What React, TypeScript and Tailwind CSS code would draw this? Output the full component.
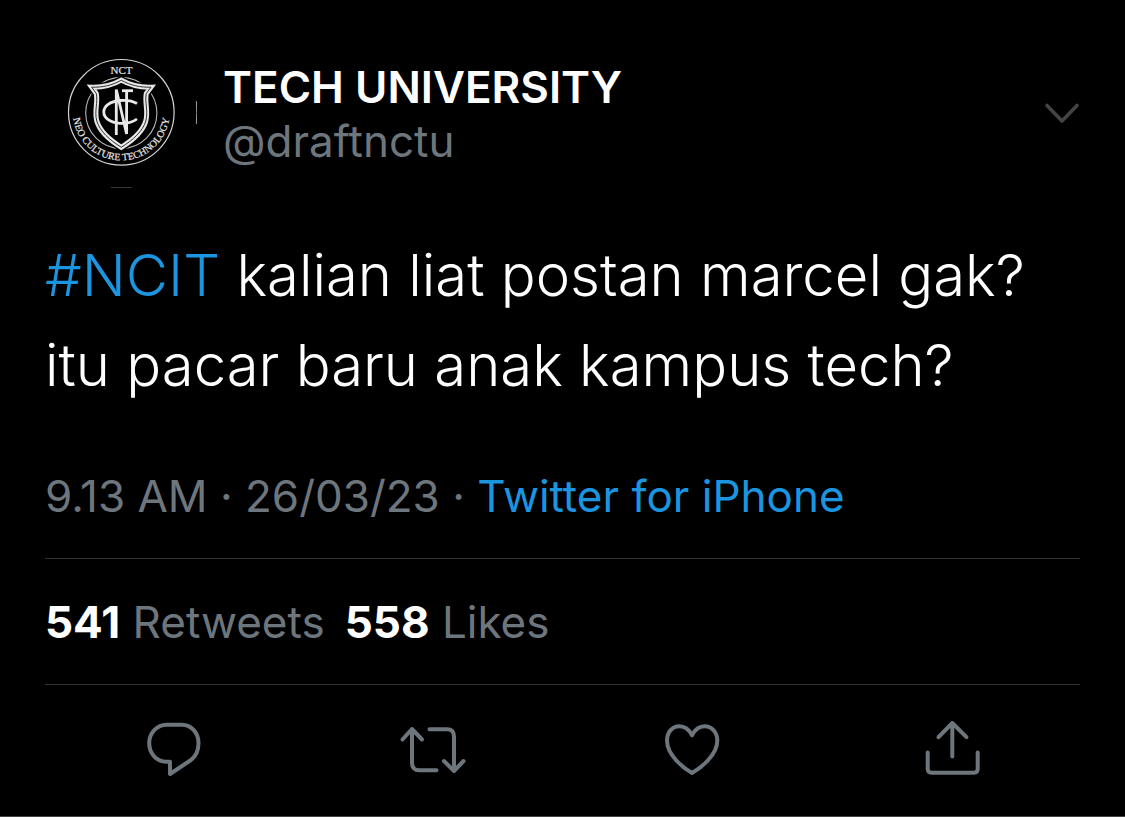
import type { ReactNode } from 'react';

const actions: { label: string; icon: ReactNode }[] = [
  {
    label: 'Reply',
    icon: (
      <path d="M44 11.7H28.5C19 11.7 11.2 20 11.2 30C11.2 40.5 18.5 48.7 28.5 48.7H32V61L53 47C57.5 43.5 60.5 37 60.5 30C60.5 20 53.5 11.7 44 11.7Z" />
    ),
  },
  {
    label: 'Retweet',
    icon: (
      <>
        <path d="M5.5 26.5L15 16L25 26.5" />
        <path d="M15 16.5V50C15 54.5 17.5 57.3 22 57.3H39.5" />
        <path d="M32.5 16.3H50C54.5 16.3 57 19 57 23.5V57.5" />
        <path d="M47 48L57 58L66.5 48" />
      </>
    ),
  },
  {
    label: 'Like',
    icon: (
      <path d="M36 22.3C33 16.5 28.8 13.3 23.5 13.3C16 13.3 11 19.5 11 27.5C11 42 27 54.8 36 60C45 54.8 61.3 42 61.3 27.5C61.3 19.5 56 13.3 48.5 13.3C43.2 13.3 39 16.5 36 22.3Z" />
    ),
  },
  {
    label: 'Share',
    icon: (
      <>
        <path d="M23.5 24.2L37.3 10L51.5 24.2" />
        <path d="M37.3 10.5V43.5" />
        <path d="M12.7 39.5V56C12.7 58.5 14 59.7 16.5 59.7H59C61.5 59.7 62.7 58.5 62.7 56V39.5" />
      </>
    ),
  },
];

const shield =
  'M45.7 51.2C56 51.5 66 49.5 75.3 44.2C84.6 49.5 94.6 51.5 105 51.2L100.3 57.5C98.5 67 102.5 75 99.8 85C97 95 87 104 75.3 111.3C63.6 104 53.6 95 50.8 85C48.1 75 52.1 67 50.3 57.5Z';

function Avatar() {
  return (
    <svg viewBox="-1 0 152 152" className="size-38 shrink-0" fill="none" role="img" aria-label="Tech University">
      <circle cx="75.3" cy="76.3" r="52.8" stroke="#d4d4d4" strokeWidth="1.2" />
      <circle cx="75.3" cy="77" r="35.6" stroke="#b5b5b5" strokeWidth="1.1" />
      <path d={shield} fill="#000" stroke="#000" strokeWidth="8" />
      <path d={shield} stroke="#e8e8e8" strokeWidth="5" />
      <path d={shield} stroke="#333" strokeWidth="1" />

      {/* monogram */}
      <g stroke="#e8e8e8" strokeWidth="2.8">
        <path d="M91 67.5C86 64.5 80 64 74 64.5C64 65.5 57.8 70 57.8 76C57.8 82 64 86.5 74 87.3C81 87.8 87 86 91 83" />
        <path d="M70.3 99V53.5L80.6 98V55" />
        <path d="M76 54.7H87" />
      </g>

      <path id="seal-arc" d="M27.7 68A48.3 48.3 0 1 0 122.9 68" />
      <g fill="#e4e4e4" stroke="#e4e4e4" strokeWidth="0.2" className="font-['Liberation_Serif',serif]">
        <text x="75.5" y="38" textAnchor="middle" fontSize="11">NCT</text>
        <text fontSize="10" textAnchor="middle">
          <textPath href="#seal-arc" startOffset="50%">NEO CULTURE TECHNOLOGY</textPath>
        </text>
      </g>

      {/* edge of the round crop */}
      <path d="M150.4 65Q151 76.5 150.4 88" stroke="#999" />
      <path d="M65 151.7H86" stroke="#444" />
    </svg>
  );
}

export default function App() {
  return (
    <main className="min-h-screen bg-black border-b border-[#444] px-[45px] pt-9 font-['Inter',sans-serif] text-[44px] leading-[54px] text-[#6e767d]">
      <article>
        <header className="flex items-center gap-[26px]">
          <Avatar />
          <div className="min-w-0 flex-1 pt-1">
            <h1 className="font-semibold text-white">TECH UNIVERSITY</h1>
            <p>@draftnctu</p>
          </div>
          <button type="button" aria-label="More options">
            <svg viewBox="0 0 36 36" className="size-9" fill="none" stroke="#444" strokeWidth="3.6" strokeLinecap="round" strokeLinejoin="round">
              <path d="M3 11.5L18 27L33 11.5" />
            </svg>
          </button>
        </header>

        <p className="mt-[42px] text-[58px] leading-[90px] font-light text-white">
          <a href="#ncit" className="text-[#1b95e0]">#NCIT</a> kalian liat postan marcel gak?
          <br />
          itu pacar baru anak kampus tech?
        </p>

        <p className="mt-[59px]">
          9.13 AM · 26/03/23 · <a href="#source" className="text-[#1b95e0]">Twitter for iPhone</a>
        </p>

        <div className="mt-[35px] flex gap-5 border-y border-[#2f3336] pt-9 pb-[35px]">
          <p><span className="font-bold text-white">541</span> Retweets</p>
          <p><span className="font-bold text-white">558</span> Likes</p>
        </div>

        <div className="grid grid-cols-4 justify-items-center pt-7">
          {actions.map((action) => (
            <button key={action.label} type="button" aria-label={action.label}>
              <svg viewBox="0 0 72 72" className="size-18" fill="none" stroke="#6e767d" strokeWidth="4" strokeLinecap="round" strokeLinejoin="round">
                {action.icon}
              </svg>
            </button>
          ))}
        </div>
      </article>
    </main>
  );
}
